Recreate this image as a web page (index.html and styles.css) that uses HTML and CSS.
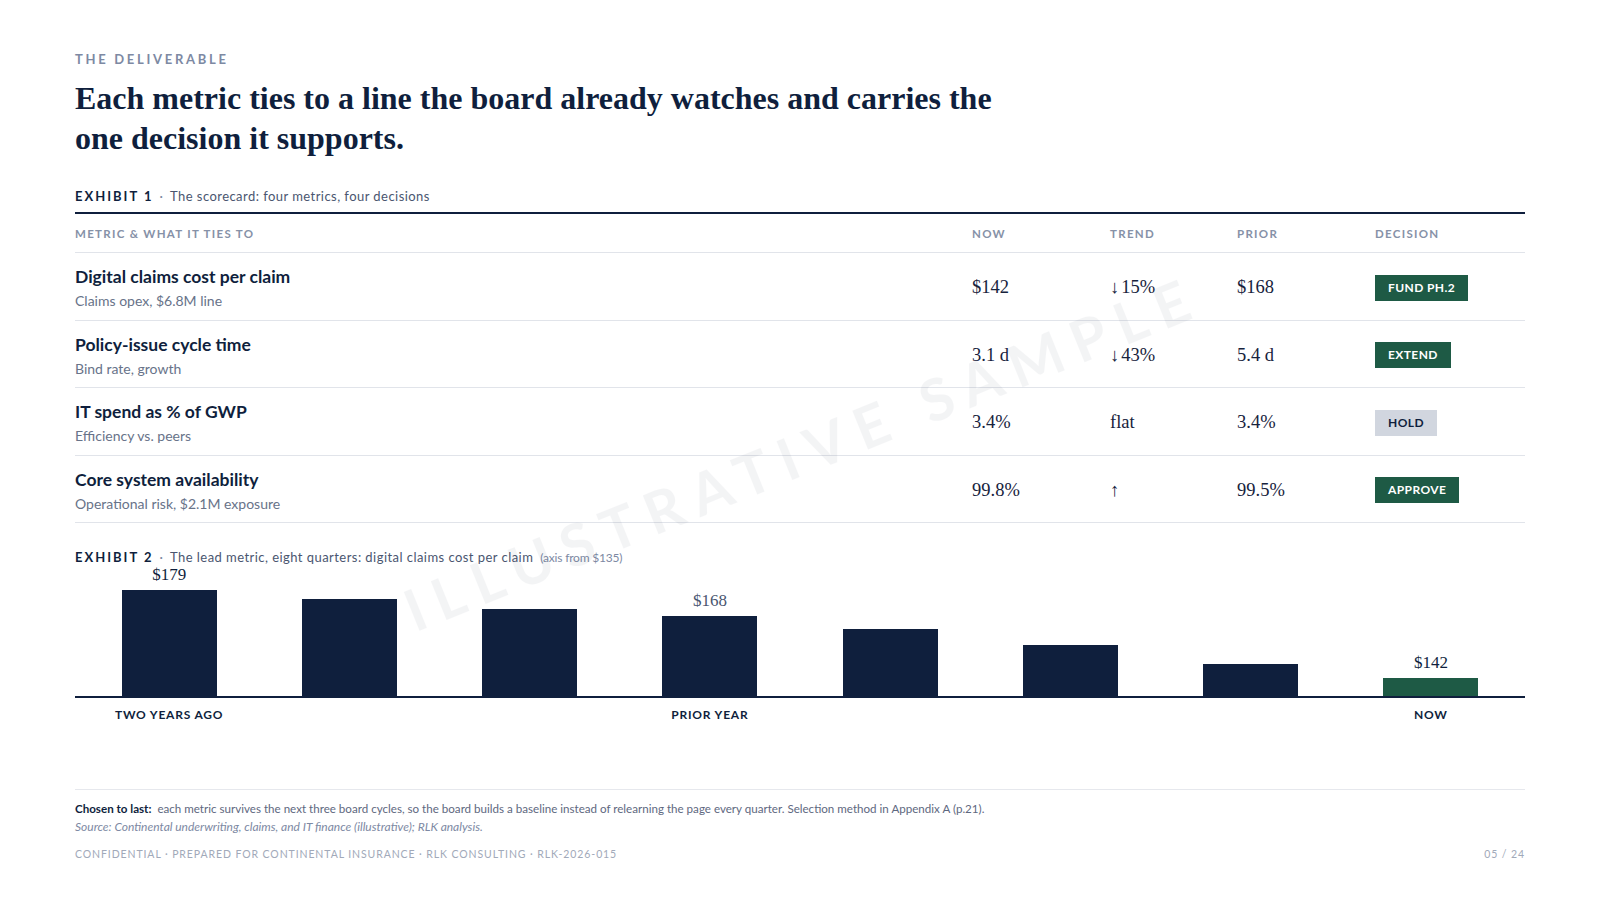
FILE: index.html
```html
<!DOCTYPE html>
<html lang="en">
<head>
<meta charset="utf-8">
<title>The deliverable</title>
<link rel="stylesheet" href="styles.css">
</head>
<body>
<div class="page">
  <div class="watermark">ILLUSTRATIVE SAMPLE</div>

  <header class="intro">
    <div class="eyebrow">THE DELIVERABLE</div>
    <h1 class="title">Each metric ties to a line the board already watches and carries the one decision it supports.</h1>
  </header>

  <section class="exhibit">
    <div class="exhibit-label"><span class="ex-num">EXHIBIT 1</span><span class="ex-dot">·</span><span class="ex-text">The scorecard: four metrics, four decisions</span></div>
    <div class="table">
      <div class="row head">
        <div class="cell">METRIC &amp; WHAT IT TIES TO</div>
        <div class="cell">NOW</div>
        <div class="cell">TREND</div>
        <div class="cell">PRIOR</div>
        <div class="cell">DECISION</div>
      </div>
      <div class="row">
        <div class="cell metric"><div class="m-name">Digital claims cost per claim</div><div class="m-sub">Claims opex, $6.8M line</div></div>
        <div class="cell num">$142</div>
        <div class="cell num"><span class="arrow">↓</span>15%</div>
        <div class="cell num">$168</div>
        <div class="cell"><span class="badge green">FUND PH.2</span></div>
      </div>
      <div class="row">
        <div class="cell metric"><div class="m-name">Policy-issue cycle time</div><div class="m-sub">Bind rate, growth</div></div>
        <div class="cell num">3.1 d</div>
        <div class="cell num"><span class="arrow">↓</span>43%</div>
        <div class="cell num">5.4 d</div>
        <div class="cell"><span class="badge green">EXTEND</span></div>
      </div>
      <div class="row">
        <div class="cell metric"><div class="m-name">IT spend as % of GWP</div><div class="m-sub">Efficiency vs. peers</div></div>
        <div class="cell num">3.4%</div>
        <div class="cell num">flat</div>
        <div class="cell num">3.4%</div>
        <div class="cell"><span class="badge grey">HOLD</span></div>
      </div>
      <div class="row">
        <div class="cell metric"><div class="m-name">Core system availability</div><div class="m-sub">Operational risk, $2.1M exposure</div></div>
        <div class="cell num">99.8%</div>
        <div class="cell num"><span class="arrow">↑</span></div>
        <div class="cell num">99.5%</div>
        <div class="cell"><span class="badge green">APPROVE</span></div>
      </div>
    </div>
  </section>

  <section class="exhibit chart-ex">
    <div class="exhibit-label"><span class="ex-num">EXHIBIT 2</span><span class="ex-dot">·</span><span class="ex-text">The lead metric, eight quarters: digital claims cost per claim</span><span class="ex-note">(axis from $135)</span></div>
    <div class="chart">
      <div class="col"><span class="val">$179</span><div class="bar" style="height:106px"></div></div>
      <div class="col"><div class="bar" style="height:97px"></div></div>
      <div class="col"><div class="bar" style="height:87px"></div></div>
      <div class="col"><span class="val muted">$168</span><div class="bar" style="height:80px"></div></div>
      <div class="col"><div class="bar" style="height:67px"></div></div>
      <div class="col"><div class="bar" style="height:51px"></div></div>
      <div class="col"><div class="bar" style="height:32px"></div></div>
      <div class="col"><span class="val">$142</span><div class="bar now" style="height:18px"></div></div>
    </div>
    <div class="axis">
      <div class="tick">TWO YEARS AGO</div>
      <div class="tick"></div>
      <div class="tick"></div>
      <div class="tick">PRIOR YEAR</div>
      <div class="tick"></div>
      <div class="tick"></div>
      <div class="tick"></div>
      <div class="tick">NOW</div>
    </div>
  </section>

  <footer class="foot">
    <p class="note"><strong>Chosen to last:</strong> each metric survives the next three board cycles, so the board builds a baseline instead of relearning the page every quarter. Selection method in Appendix A (p.21).</p>
    <p class="source">Source: Continental underwriting, claims, and IT finance (illustrative); RLK analysis.</p>
    <div class="legal">
      <span>CONFIDENTIAL · PREPARED FOR CONTINENTAL INSURANCE · RLK CONSULTING · RLK-2026-015</span>
      <span>05 / 24</span>
    </div>
  </footer>
</div>
</body>
</html>
```

FILE: styles.css
```css
* { box-sizing: border-box; }
html, body { margin: 0; padding: 0; background: #ffffff; }
body {
  font-family: Lato, "Noto Sans", "Liberation Sans", sans-serif;
  color: #0f1f3d;
  width: 1600px;
  height: 900px;
  overflow: hidden;
}
.page {
  position: relative;
  padding: 51px 75px 0 75px;
  height: 900px;
}
.watermark {
  position: absolute;
  left: 802px;
  top: 452px;
  transform: translate(-50%, -50%) rotate(-22deg);
  font-family: Lato, sans-serif;
  font-size: 58px;
  font-weight: 700;
  letter-spacing: 12px;
  color: #0f1f3d;
  opacity: 0.045;
  white-space: nowrap;
  pointer-events: none;
}
.eyebrow {
  font-size: 13px;
  font-weight: 700;
  letter-spacing: 2.7px;
  color: #7d89a3;
  line-height: 16px;
}
.title {
  margin: 11px 0 0 0;
  max-width: 940px;
  font-family: "Liberation Serif", "Times New Roman", serif;
  font-weight: 700;
  font-size: 32px;
  line-height: 40px;
  color: #0f1f3d;
}
.exhibit { margin-top: 29px; }
.exhibit-label {
  font-size: 13px;
  line-height: 18px;
  display: flex;
  align-items: baseline;
}
.ex-num { font-weight: 700; letter-spacing: 2px; color: #0f1f3d; }
.ex-dot { color: #7d89a3; margin: 0 7px 0 6px; }
.ex-text { color: #4a5670; letter-spacing: 0.45px; }
.ex-note { color: #7d89a3; font-size: 12px; margin-left: 7px; letter-spacing: -0.2px; }

.table {
  margin-top: 7px;
  border-top: 2.5px solid #0f1f3d;
}
.row {
  display: grid;
  grid-template-columns: 897px 138px 127px 138px 1fr;
  align-items: center;
  border-bottom: 1.5px solid #e1e4ea;
  height: 67.5px;
}
.row.head {
  height: 39px;
  font-size: 11.5px;
  font-weight: 700;
  letter-spacing: 1.3px;
  color: #8691a7;
}
.metric { padding-top: 4px; }
.m-name {
  font-size: 17.5px;
  font-weight: 700;
  line-height: 22px;
  color: #0f1f3d;
}
.m-sub {
  margin-top: 4px;
  font-size: 14px;
  line-height: 18px;
  color: #687389;
}
.num {
  font-family: "Liberation Serif", "Times New Roman", serif;
  font-size: 18.5px;
  color: #17233d;
  padding-top: 3px;
}
.arrow { margin-right: 2px; }
.badge {
  display: inline-block;
  height: 26px;
  line-height: 26px;
  padding: 0 13px;
  font-size: 12px;
  font-weight: 700;
  letter-spacing: 0.4px;
  margin-top: 3px;
}
.badge.green { background: #1e5a45; color: #ffffff; }
.badge.grey { background: #d1d6df; color: #0f1f3d; }

.chart-ex { margin-top: 25px; }
.chart {
  display: flex;
  height: 136px;
  padding: 0 4px;
  border-bottom: 2px solid #0f1f3d;
  margin-top: -5px;
}
.col {
  flex: 1;
  display: flex;
  flex-direction: column;
  justify-content: flex-end;
  align-items: center;
}
.val {
  font-family: "Liberation Serif", "Times New Roman", serif;
  font-size: 17px;
  line-height: 20px;
  margin-bottom: 5px;
  color: #0f1f3d;
  flex-shrink: 0;
}
.val.muted { color: #4a5670; }
.bar {
  width: 95px;
  flex-shrink: 0;
  background: #0f1f3d;
}
.bar.now { background: #1e5a45; }
.axis {
  display: flex;
  margin-top: 9px;
  padding: 0 4px;
}
.tick {
  flex: 1;
  text-align: center;
  font-size: 12px;
  font-weight: 700;
  letter-spacing: 0.8px;
  color: #0f1f3d;
  line-height: 16px;
}
.foot {
  margin-top: 66px;
  border-top: 1.5px solid #e6e8ed;
  padding-top: 11px;
}
.note {
  margin: 0;
  font-size: 11.6px;
  line-height: 16px;
  color: #5e6880;
}
.note strong { color: #0f1f3d; font-weight: 700; margin-right: 3px; }
.source {
  margin: 2px 0 0 0;
  font-size: 12px;
  line-height: 16px;
  font-style: italic;
  color: #7d89a3;
}
.legal {
  margin-top: 12px;
  display: flex;
  justify-content: space-between;
  font-size: 10.5px;
  line-height: 14px;
  letter-spacing: 0.9px;
  color: #a1a9b9;
}
```
